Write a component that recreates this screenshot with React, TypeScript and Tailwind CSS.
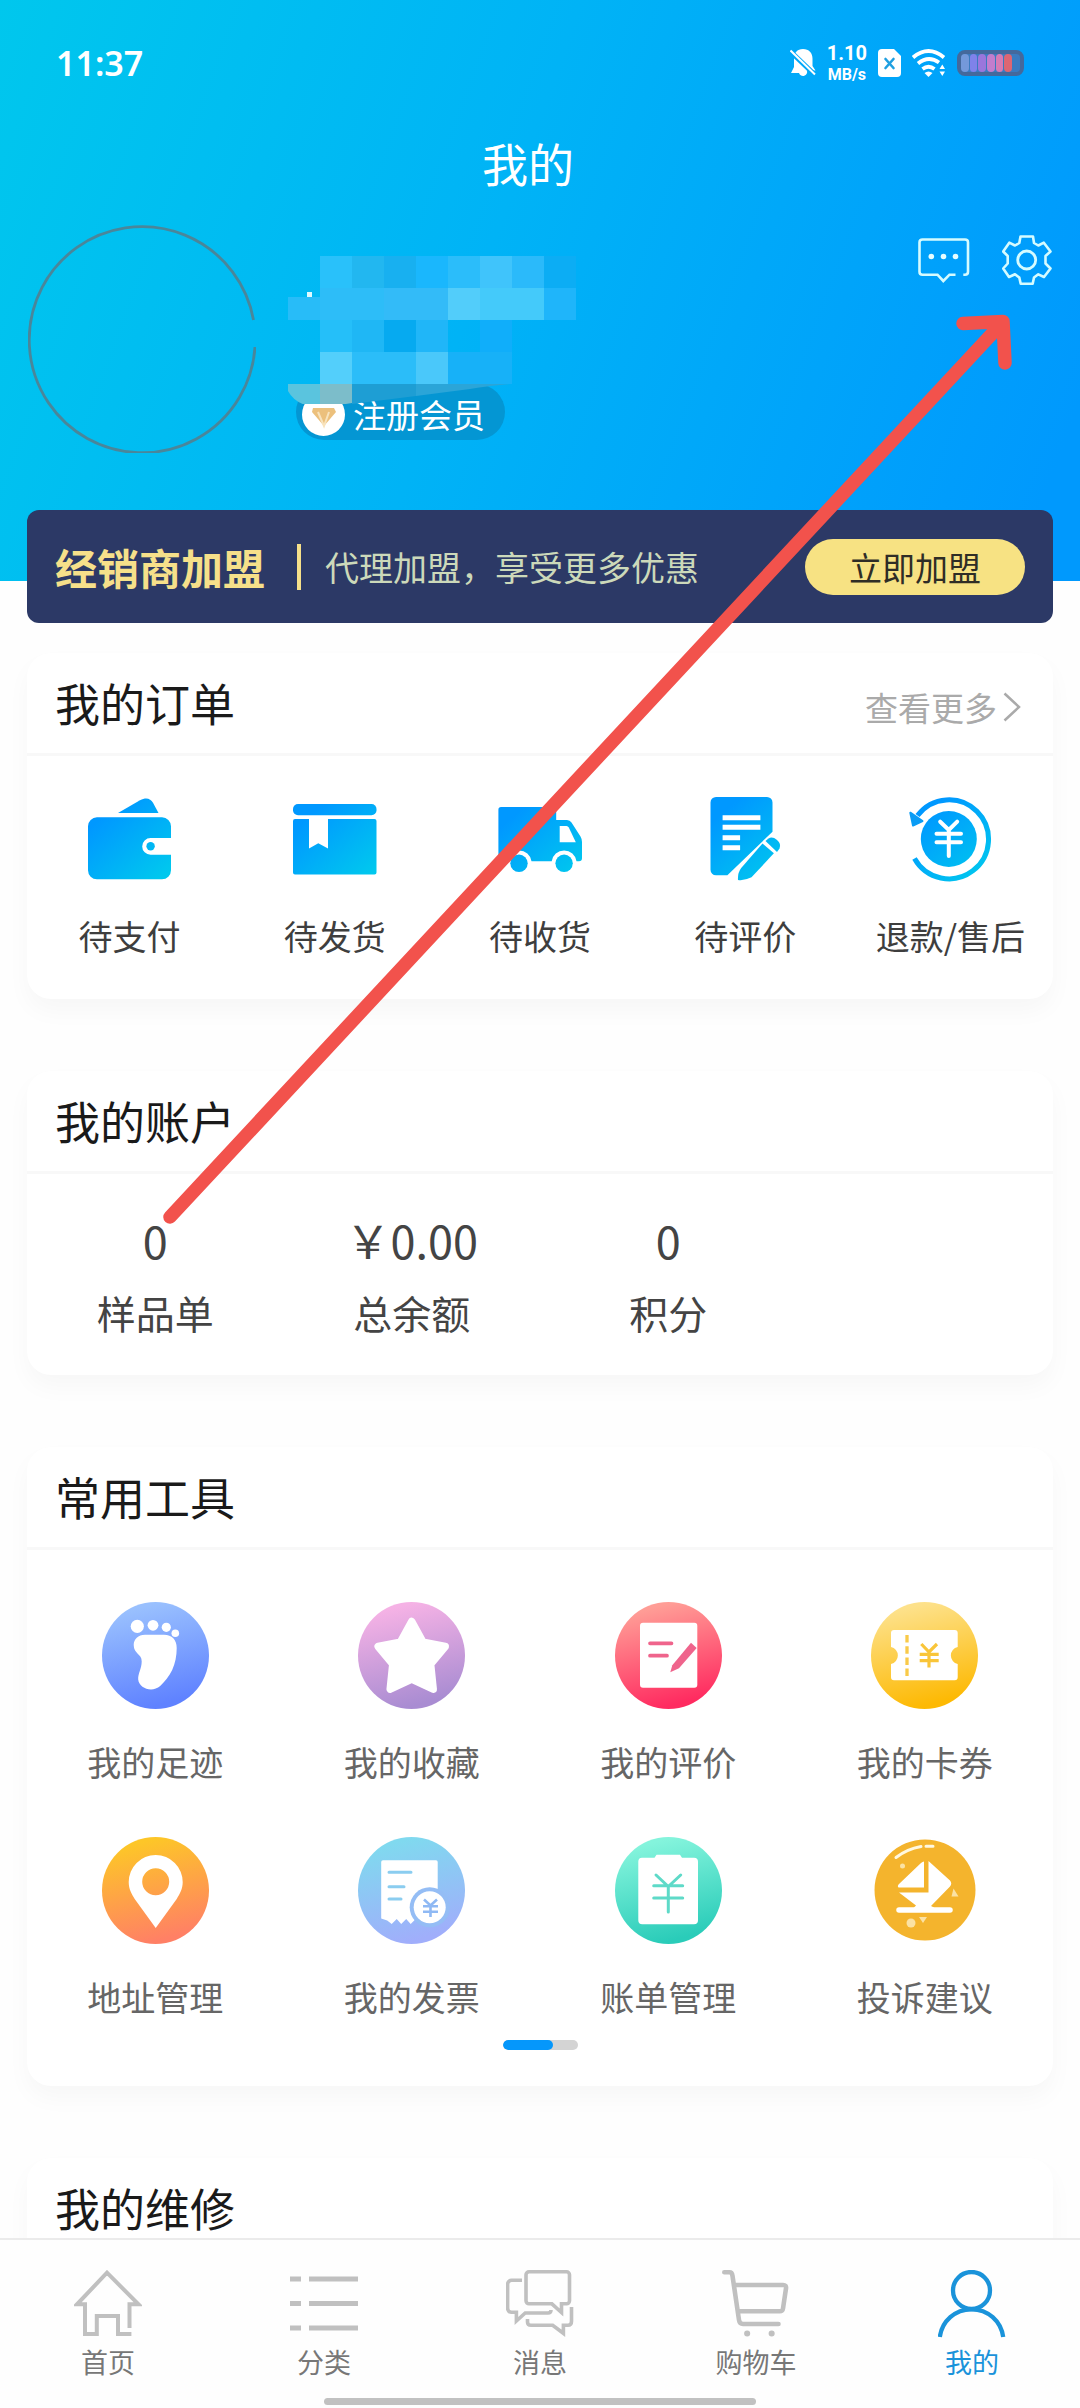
import type { ReactNode } from "react";

type Item = { label: string; icon: ReactNode };

/* Shared blue gradient for the order icons */
function BlueGradient({ id }: { id: string }) {
  return (
    <defs>
      <linearGradient id={id} x1="10" y1="8" x2="74" y2="84" gradientUnits="userSpaceOnUse">
        <stop offset="0.15" stopColor="#0098ff" />
        <stop offset="1" stopColor="#00c8ee" />
      </linearGradient>
    </defs>
  );
}

function WalletIcon() {
  return (
    <svg className="size-22" viewBox="0 0 88 88" aria-hidden="true">
      <BlueGradient id="wallet" />
      <g fill="url(#wallet)">
        <path d="M32 18 54 5.3c6-3.3 10.500-2 13 2.500L72.500 18z" />
        <path d="M11 22.300h65a9 9 0 0 1 9 9V43H64.600a8.400 8.400 0 0 0 0 16.800H85v15.500a9 9 0 0 1-9 9H11a9 9 0 0 1-9-9v-44a9 9 0 0 1 9-9z" />
        <circle cx="64.600" cy="51.200" r="4.200" />
      </g>
    </svg>
  );
}

function ParcelIcon() {
  return (
    <svg className="size-22" viewBox="0 0 88 88" aria-hidden="true">
      <BlueGradient id="parcel" />
      <g fill="url(#parcel)">
        <rect x="2" y="9" width="83.500" height="11.300" rx="5" />
        <path d="M4 24h14v29.500l9.300-5.200 9.700 5.200V24h46.500q2 0 2 2v51.500q0 2-2 2H4q-2 0-2-2V26q0-2 2-2z" />
      </g>
    </svg>
  );
}

function TruckIcon() {
  return (
    <svg className="size-22" viewBox="0 0 88 88" aria-hidden="true">
      <BlueGradient id="truck" />
      <path
        fill="url(#truck)"
        d="M5 12h52.500q2.700 0 2.700 2.700V25H71q3 0 4.500 2.500l9 14Q86 44 86 47v16.300q0 3-3 3H80.500a12.500 12.500 0 0 0-24.800 0H35.500a12.500 12.500 0 0 0-24.800 0H5.400q-3 0-3-3V14.700Q2.400 12 5 12z"
      />
      <path fill="#fff" d="M63.700 31h6.800q1.500 0 2.300 1.500l7 14.800H63.700z" />
      <g fill="url(#truck)">
        <circle cx="23" cy="68.300" r="8.700" />
        <circle cx="68.100" cy="68.300" r="8.700" />
      </g>
    </svg>
  );
}

function EditIcon() {
  return (
    <svg className="size-22" viewBox="0 0 88 88" aria-hidden="true">
      <BlueGradient id="edit" />
      <g fill="url(#edit)">
        <path d="M15 2h51a5.500 5.500 0 0 1 5.500 5.500v29.200L26.400 80.300H15a5.500 5.500 0 0 1-5.500-5.500V7.500A5.500 5.500 0 0 1 15 2z" />
        <path d="M37 85q-.6-7 3.200-12L61.500 48.600l11.400 9.700-22.400 24Q43 86 37 85z" />
        <path d="m64.500 46 3-2.600q4-2.200 8.500 1.600t2.500 8.500L76 57z" />
      </g>
      <path d="M21.600 22.700h37.800M21.600 32.300h37.800M21.600 42.700h17.500M21.600 52.700h17.500" stroke="#fff" strokeWidth="5" />
    </svg>
  );
}

function RefundIcon() {
  return (
    <svg className="size-22" viewBox="0 0 88 88" aria-hidden="true">
      <BlueGradient id="refund" />
      <circle cx="42.800" cy="44" r="28" fill="url(#refund)" />
      <path d="M8.500 63.500A39.500 39.500 0 1 0 11.500 20.500" fill="none" stroke="url(#refund)" strokeWidth="5" />
      <path d="M4.300 17.700 16.500 26 7 30.500z" fill="#0a9cf5" stroke="#0a9cf5" strokeWidth="2" strokeLinejoin="round" />
      <path
        d="m34.200 26.700 8.600 8.300 8.400-8.300M30.500 38.700h24.500M30.500 47.300h24.500M42.800 35v26"
        fill="none"
        stroke="#fff"
        strokeWidth="4"
        strokeLinecap="round"
      />
    </svg>
  );
}

/* Round badge with a vertical gradient, used by every tool */
function Disc({ id, from, to, children }: { id: string; from: string; to: string; children: ReactNode }) {
  return (
    <svg className="size-[107px]" viewBox="0 0 107 107" aria-hidden="true">
      <defs>
        <linearGradient id={id} x1="0.35" y1="0" x2="0.6" y2="1">
          <stop offset="0.05" stopColor={from} />
          <stop offset="0.95" stopColor={to} />
        </linearGradient>
      </defs>
      <circle cx="53.500" cy="53.500" r="53.500" fill={`url(#${id})`} />
      {children}
    </svg>
  );
}

const orders: Item[] = [
  { label: "待支付", icon: <WalletIcon /> },
  { label: "待发货", icon: <ParcelIcon /> },
  { label: "待收货", icon: <TruckIcon /> },
  { label: "待评价", icon: <EditIcon /> },
  { label: "退款/售后", icon: <RefundIcon /> },
];

const account = [
  { label: "样品单", value: "0" },
  { label: "总余额", value: "￥0.00" },
  { label: "积分", value: "0" },
];

const tools: Item[] = [
  {
    label: "我的足迹",
    icon: (
      <Disc id="foot" from="#99c0fe" to="#5f82ff">
        <g fill="#fff">
          <circle cx="35.300" cy="24.300" r="6.600" />
          <circle cx="51" cy="23.300" r="5.400" />
          <circle cx="64.300" cy="25.300" r="4.600" />
          <circle cx="73.300" cy="31.300" r="3.800" />
          <path d="M43 32.700h19c8 0 12.700 5 12.700 13.300 0 8-1.500 15-4.500 22-3 6.500-7.500 11.500-12 16-8 7-21 2.500-22-6.500-.4-6 3.500-11 3.500-18 0-8-8-7.500-8-16.500 0-5.500 4.500-10.300 11.300-10.300z" />
        </g>
      </Disc>
    ),
  },
  {
    label: "我的收藏",
    icon: (
      <Disc id="star" from="#f5b2e5" to="#a98cd2">
        <path
          d="m53.700 19.500 11.400 20.800 22.100 4.200-14.600 17.700 2.600 25-21.500-10-21.500 10 2.600-25-14.600-17.700 22.100-4.200z"
          fill="#fff"
          stroke="#fff"
          strokeWidth="7.500"
          strokeLinejoin="round"
        />
      </Disc>
    ),
  },
  {
    label: "我的评价",
    icon: (
      <Disc id="review" from="#ff9d96" to="#ff2b60">
        <rect x="25" y="20.700" width="57.300" height="65" rx="3" fill="#fff" />
        <path d="M35 41.300h21.500M35 53.700h17" stroke="#ef648c" strokeWidth="3.700" strokeLinecap="round" />
        <path d="m76 40.700 5.700 5.300L64 66.300l-8.700 4 2-7z" fill="#ef648c" />
      </Disc>
    ),
  },
  {
    label: "我的卡券",
    icon: (
      <Disc id="coupon" from="#fde18a" to="#fdb903">
        <path d="M23 28h60.700q3 0 3 3v14a8.700 8.700 0 0 0 0 17v13.300q0 3-3 3H23q-3 0-3-3V62a8.700 8.700 0 0 0 0-17V31q0-3 3-3z" fill="#fff" />
        <path d="M36 33v41.500" stroke="#f9ca48" strokeWidth="3.300" strokeDasharray="7.500 3.700" />
        <path d="m50.300 42 7.700 8 8-8M48.700 52.300h19M48.700 58.700h19M58 50v15.500" fill="none" stroke="#f9c539" strokeWidth="3.200" />
      </Disc>
    ),
  },
  {
    label: "地址管理",
    icon: (
      <Disc id="pin" from="#fdc628" to="#ff8065">
        <path
          fillRule="evenodd"
          fill="#fff"
          d="M53.700 18a27 27 0 0 1 27 27c0 7-3 12-6 17L53.700 91 32.700 62c-3-5-6-10-6-17a27 27 0 0 1 27-27zm0 13.300a13.500 13.500 0 1 0 0 27 13.500 13.500 0 0 0 0-27z"
        />
      </Disc>
    ),
  },
  {
    label: "我的发票",
    icon: (
      <Disc id="invoice" from="#80d9ef" to="#a0aefb">
        <path d="M25 23.300h53q1.700 0 1.700 1.700v57l-5 5-6-5-5 5-6-5-5 5-4.500-5-5 5-4.500-5-5 5-4.500-3.500-6-2V25q0-1.700 1.800-1.700z" fill="#fff" />
        <path d="M31 35.300h22M31 49.700h15M31 62h12" stroke="#8bcdf0" strokeWidth="3" strokeLinecap="round" />
        <circle cx="71.700" cy="70.300" r="20" fill="#94bdf5" />
        <circle cx="71.700" cy="70.300" r="16" fill="#fff" />
        <path d="m66 62.500 6.500 6 6.500-6M65 69.300h15M65 74.700h15M72.500 68.500v11.500" fill="none" stroke="#8fb9f4" strokeWidth="2.600" />
      </Disc>
    ),
  },
  {
    label: "账单管理",
    icon: (
      <Disc id="bill" from="#84f4dc" to="#2accb9">
        <path d="M27 20.700h12.500l2-3h23.500l2 3H79q4 0 4 4v58.600q0 4-4 4H27.300q-4 0-4-4V24.700q0-4 3.700-4z" fill="#fff" />
        <path
          d="m41 38 12.300 11.500L65.700 38M38.700 48.700h29M38.700 61h29M53.300 49.500V75"
          fill="none"
          stroke="#5edac8"
          strokeWidth="3"
          strokeLinecap="round"
        />
      </Disc>
    ),
  },
  {
    label: "投诉建议",
    icon: (
      <svg className="size-[107px]" viewBox="0 0 107 107" aria-hidden="true">
        <circle cx="54" cy="53" r="50.500" fill="#f4b42d" />
        <path d="M53 24.500v26H27.500q-1.500-1.500.5-3.500l22-21q1.500-1.500 3-1.500z" fill="#fff" />
        <path d="M57.500 24 79 43.500q2.500 3 0 6L60 69q3 1 4 3H42q1-2 3-3.500L28 55.500h29.500z" fill="#fff" />
        <path d="M28 73h51" stroke="#fff" strokeWidth="5.500" strokeLinecap="round" />
        <path d="M25 20.500Q36 12 50 9.500M55 9.300h7" fill="none" stroke="#fff8e0" strokeWidth="3" strokeLinecap="round" />
        <g fill="#fbe2a4">
          <circle cx="31.500" cy="29" r="2.500" />
          <path d="m82.500 51.500 5 8h-7z" />
          <circle cx="40" cy="86" r="4.500" />
          <path d="M48 80h8l-4 6z" />
        </g>
      </svg>
    ),
  },
];

const tabs: Item[] = [
  {
    label: "首页",
    icon: <path d="M57.400 64H44V46H22.800v18H11V34.300H3L33 2.700l31.500 31.600h-9V58" strokeWidth="4" />,
  },
  {
    label: "分类",
    icon: <path d="M0 9h11M19 9h49M0 33.500h11M19 33.500h49M0 58h11M19 58h49" strokeWidth="5" />,
  },
  {
    label: "消息",
    icon: (
      <g strokeWidth="3.600">
        <path d="M23 1.800h37.500a3 3 0 0 1 3 3v26a3 3 0 0 1-3 3h-5v8.700l-9.600-8.700H23a3 3 0 0 1-3-3v-26a3 3 0 0 1 3-3z" />
        <path d="M16 10.300H5.600a4 4 0 0 0-4 4v24a4 4 0 0 0 4 4h4.800V51l8.800-8H42q3 0 3-3" />
        <path d="M21.500 49v3q0 3.300 3.500 3.300h21.700l10.700 8V55.300h4.600q3.500 0 3.500-4V37" />
      </g>
    ),
  },
  {
    label: "购物车",
    icon: (
      <g strokeWidth="4.600" strokeLinecap="round" strokeLinejoin="round">
        <path d="M2.300 2.300h5.200q2.500 0 3 3.500L17 50q.6 4 4 4h35.500M13.600 15h47.500q3.400 0 2.900 3.300L61 38.500q-.4 2.800-3.200 2.800H17" />
        <path d="M25.100 63.500h.1M49.600 63.500h.1" strokeWidth="6" />
      </g>
    ),
  },
  {
    label: "我的",
    icon: (
      <g strokeWidth="4.300">
        <circle cx="33.500" cy="20.500" r="18.500" />
        <path d="M1.800 67C4 51 17 39.300 33.500 39.300S63 51 65.200 67" />
      </g>
    ),
  },
];

/* Colour blocks that hide the user name: x, y, width, height, colour */
const blocks: [number, number, number, number, string][] = [
  [32, 0, 32, 32, "#29c1fa"],
  [64, 0, 32, 32, "#22b7f0"],
  [96, 0, 32, 32, "#18b0f0"],
  [128, 0, 32, 32, "#1ab7fd"],
  [160, 0, 32, 32, "#2bbdfa"],
  [192, 0, 32, 32, "#40c4fb"],
  [224, 0, 32, 32, "#2bbafa"],
  [256, 0, 32, 32, "#0cadf4"],
  [0, 41, 32, 23, "#28bcf8"],
  [32, 32, 64, 32, "#2dbdf8"],
  [96, 32, 64, 32, "#33bbf8"],
  [160, 32, 32, 32, "#52cdfa"],
  [192, 32, 64, 32, "#44cafa"],
  [256, 32, 32, 32, "#1fb5fa"],
  [32, 64, 32, 32, "#25bff9"],
  [64, 64, 32, 32, "#1fb7f5"],
  [96, 64, 32, 32, "#06aaf0"],
  [128, 64, 32, 32, "#20b6f8"],
  [192, 64, 32, 32, "#10aefa"],
  [32, 96, 32, 32, "#53cffb"],
  [64, 96, 64, 32, "#2bbdf9"],
  [128, 96, 32, 32, "#4ac8fa"],
  [160, 96, 64, 32, "#17b1f8"],
];

function StatusBar() {
  return (
    <div className="flex h-[126px] items-center justify-between px-14 font-['Noto_Sans','Noto_Sans_CJK_SC',sans-serif]">
      <time className="text-[34px] leading-10 font-semibold">11:37</time>
      <div className="flex items-center gap-[11px]">
        {/* Muted bell */}
        <svg className="h-7 w-[26px]" viewBox="0 0 26 28" aria-hidden="true">
          <path d="M13 0c6 0 9.500 4 9.500 9.500V17l3 4.500H17a4 4 0 0 1-8 2.500H1l3-6V9.500C4 4 7 0 13 0z" fill="#fff" />
          <path d="m0 2 25 24" stroke="#00a7f9" strokeWidth="5" />
          <path d="m.5 1.500 24.500 24" stroke="#fff" strokeWidth="2" />
        </svg>
        <div className="flex flex-col items-center font-['Roboto',sans-serif] font-bold">
          <span className="text-[20px] leading-6">1.10</span>
          <span className="text-[16px] leading-5">MB/s</span>
        </div>
        {/* SIM card */}
        <svg className="h-7 w-[23px]" viewBox="0 0 23 28" aria-hidden="true">
          <path d="M4 0h12l7 7v17q0 4-4 4H4q-4 0-4-4V4q0-4 4-4z" fill="#fff" />
          <path d="m7.500 10 8 9M15.500 10l-8 9" stroke="#1f9fe0" strokeWidth="2.600" strokeLinecap="round" />
        </svg>
        {/* Wi-Fi */}
        <svg className="h-7 w-[34px]" viewBox="0 0 34 28" aria-hidden="true">
          <g fill="none" stroke="#fff" strokeWidth="3.800">
            <path d="M1 8.500Q16.500-4.500 32 8.500" />
            <path d="M6 14.500q10.500-8.500 21-1" />
            <path d="M10.500 20q6-4.500 12 0" />
          </g>
          <path d="M12.500 24q4-3 8 0l-4 4zM27.500 20h5.500l-2.700-4.500zM27.500 22.500h5.500L30.300 27z" fill="#fff" />
        </svg>
        {/* Battery */}
        <div className="flex h-[26px] w-[67px] items-center gap-px rounded-lg border-4 border-[#44699c] bg-[#3a7bc0] pr-2">
          <span className="h-[18px] flex-1 rounded bg-[#7499da]" />
          <span className="h-[18px] flex-1 rounded bg-[#7f82ea]" />
          <span className="h-[18px] flex-1 rounded bg-[#9a76dc]" />
          <span className="h-[18px] flex-1 rounded bg-[#c27dcd]" />
          <span className="h-[18px] flex-1 rounded bg-[#d67bb4]" />
          <span className="h-[18px] flex-1 rounded bg-[#dd6673]" />
        </div>
      </div>
    </div>
  );
}

function Profile() {
  return (
    <section className="flex items-start gap-8 px-7 pt-[21px]">
      <svg className="size-[228px] shrink-0" viewBox="0 0 228 228" role="img" aria-label="头像">
        <path d="M227 122A113 113 0 1 1 225.500 95" fill="none" stroke="#4a869a" strokeWidth="2.800" />
      </svg>

      <div className="flex flex-1 flex-col items-start pt-[31px]">
        <svg className="relative z-10 h-[148px] w-72" viewBox="0 0 288 148" aria-hidden="true">
          {blocks.map(([x, y, w, h, fill]) => (
            <rect key={`${x}-${y}`} x={x} y={y} width={w} height={h} fill={fill} />
          ))}
          <rect x="19" y="36" width="5" height="5" fill="#dffaff" />
          <path d="M0 128h32v24q-24-2-32-17z" fill="#5ac4de" />
          <path d="M32 128h32v19l-32 5z" fill="#7cbdca" />
          <path d="M64 128h64v12l-64 8z" fill="#1e9ed4" />
          <path d="M128 128h94q-22 2-40 5l-54 7z" fill="#2ba5d8" />
        </svg>
        <div className="-mt-5 ml-2 flex h-14 items-center gap-2 rounded-full bg-[#0496d3] pt-1 pr-5 pl-1.5">
          <svg className="size-[43px]" viewBox="0 0 43 43" aria-hidden="true">
            <circle cx="21.500" cy="21.500" r="21.500" fill="#fff" />
            <path d="M11 15h21l2 4-12 14L10 19z" fill="#ecc07c" />
            <path d="m16 19 6 14 5-14" fill="none" stroke="#f8e3bd" strokeWidth="2" />
          </svg>
          <span className="text-[33px] leading-[50px]">注册会员</span>
        </div>
      </div>

      <div className="flex items-start gap-8 pt-2.5">
        <button type="button" aria-label="消息">
          <svg className="mt-[3px] h-[45px] w-[52px]" viewBox="0 0 52 45" aria-hidden="true">
            <path
              d="M45.300 36.700H47q3 0 3-3V4.500q0-3-3-3H4.500q-3 0-3 3v29.200q0 3 3 3h15l5.800 6.300 6.200-6.300h6"
              fill="none"
              stroke="#d5fbff"
              strokeWidth="2.600"
            />
            <g fill="#e6fdff">
              <circle cx="13.300" cy="18.500" r="2.800" />
              <circle cx="25.500" cy="18.500" r="2.800" />
              <circle cx="37.500" cy="18.500" r="2.800" />
            </g>
          </svg>
        </button>
        <button type="button" aria-label="设置">
          <svg className="size-[50px]" viewBox="0 0 50 50" aria-hidden="true">
            <path
              d="M18.500 1.500h12.500l1 6.500 4.300 2.500 5.500-2.800 6.700 8.800-5 4.500v7.500l5 5-6.500 8.500-5.700-2.700-4.300 3.200-1.300 6.200H18.700l-1.400-6.200-4.300-3.200L7 42 1.200 33.500l4.500-5V21L1.200 16.500 7.300 7.700l5.700 2.800L17.300 8z"
              fill="none"
              stroke="#d5fbff"
              strokeWidth="2.600"
              strokeLinejoin="round"
            />
            <circle cx="24.700" cy="25" r="9" fill="none" stroke="#d5fbff" strokeWidth="2.800" />
          </svg>
        </button>
      </div>
    </section>
  );
}

function Card({ title, action, children }: { title: string; action?: ReactNode; children?: ReactNode }) {
  return (
    <section className="rounded-3xl bg-white shadow-[0_12px_24px_rgba(0,0,0,0.03)]">
      <div className="flex h-[103px] items-center justify-between border-b-3 border-[#f8f8f8] pr-8 pl-7">
        <h2 className="text-[45px] leading-[60px] text-[#1a1a1a]">{title}</h2>
        {action}
      </div>
      {children}
    </section>
  );
}

export default function App() {
  return (
    <div className="relative flex h-screen flex-col overflow-hidden bg-[#fefefe] font-['Noto_Sans_CJK_SC',sans-serif]">
      <main className="min-h-0 flex-1 overflow-y-auto [scrollbar-width:none]">
        {/* Header */}
        <header className="bg-[linear-gradient(110deg,#00c7ed_0%,#00b3f6_45%,#0099fd_95%)] pb-32 text-white">
          <StatusBar />
          <h1 className="h-[78px] pr-6 text-center text-[46px] leading-[72px]">我的</h1>
          <Profile />
        </header>

        <div className="px-[27px]">
          {/* Dealer banner */}
          <section className="relative -mt-[71px] flex h-[113px] items-center rounded-xl bg-[#2c3966] px-7">
            <strong className="text-[42px] leading-[60px] font-bold text-[#f6e08a]">经销商加盟</strong>
            <span className="mr-6 ml-8 h-[46px] w-1 bg-[#f6e08a]" />
            <span className="flex-1 text-[34px] leading-[50px] text-[#ccd9ba]">代理加盟，享受更多优惠</span>
            <button type="button" className="h-14 rounded-full bg-[#f7e283] px-11 text-[33px] leading-[50px] text-[#2f2d26]">
              立即加盟
            </button>
          </section>

          <div className="mt-[30px] flex flex-col gap-[72px]">
            {/* Orders */}
            <Card
              title="我的订单"
              action={
                <a href="#orders" className="flex items-center gap-1.5 pt-2 text-[33px] leading-[50px] text-[#aaaaaa]">
                  查看更多
                  <svg className="h-[30px] w-[18px]" viewBox="0 0 18 30" aria-hidden="true">
                    <path d="m1.500 1.500 14.500 13.500L1.500 28.500" fill="none" stroke="currentColor" strokeWidth="2.500" />
                  </svg>
                </a>
              }
            >
              <div className="grid grid-cols-5 pt-[39px] pb-[38px]">
                {orders.map((item) => (
                  <a key={item.label} href="#order" className="flex flex-col items-center gap-7">
                    {item.icon}
                    <span className="text-[34px] leading-[50px] text-[#3e3e3e]">{item.label}</span>
                  </a>
                ))}
              </div>
            </Card>

            {/* Account */}
            <Card title="我的账户">
              <dl className="grid grid-cols-4 pt-9 pb-[33px]">
                {account.map((item) => (
                  <div key={item.label} className="flex flex-col-reverse items-center gap-3 text-[#444444]">
                    <dt className="text-[39px] leading-[60px]">{item.label}</dt>
                    <dd className="text-[45px] leading-[60px]">{item.value}</dd>
                  </div>
                ))}
              </dl>
            </Card>

            {/* Tools */}
            <Card title="常用工具">
              <div className="grid grid-cols-4 gap-y-[50px] pt-[52px]">
                {tools.map((item) => (
                  <a key={item.label} href="#tool" className="flex flex-col items-center gap-7">
                    {item.icon}
                    <span className="text-[34px] leading-[50px] text-[#666666]">{item.label}</span>
                  </a>
                ))}
              </div>
              <div className="flex justify-center pt-[18px] pb-9">
                <div className="h-2.5 w-[75px] overflow-hidden rounded-full bg-[#d4d4d4]">
                  <div className="h-full w-2/3 rounded-full bg-[#0597fb]" />
                </div>
              </div>
            </Card>

            {/* Repairs */}
            <Card title="我的维修" />
          </div>
        </div>
      </main>

      {/* Bottom tabs */}
      <nav className="relative border-t-2 border-[#ebebeb] bg-[#fefefe] pt-[30px] pb-[3px]">
        <div className="grid grid-cols-5">
          {tabs.map((tab) => {
            const active = tab.label === "我的";
            return (
              <a
                key={tab.label}
                href="#tab"
                aria-current={active ? "page" : undefined}
                className={`flex flex-col items-center gap-1 ${active ? "text-[#1a93da]" : "text-[#777777]"}`}
              >
                <svg
                  className={`size-[68px] ${active ? "text-[#1a93da]" : "text-[#c0c0c0]"}`}
                  viewBox="0 0 68 68"
                  fill="none"
                  stroke="currentColor"
                  aria-hidden="true"
                >
                  {tab.icon}
                </svg>
                <span className="text-[27px] leading-10">{tab.label}</span>
              </a>
            );
          })}
        </div>
        <div className="mx-auto mt-4 h-[7px] w-2/5 rounded-full bg-[#c1c1c1]" />
      </nav>

      {/* Arrow that points at the settings button */}
      <svg
        className="pointer-events-none absolute top-[312px] left-[160px] h-[920px] w-[856px]"
        viewBox="160 312 856 920"
        aria-hidden="true"
      >
        <path
          d="M170 1217 1003 322M963 323.500l40-2 2 41.500"
          fill="none"
          stroke="#f2524c"
          strokeWidth="13.500"
          strokeLinecap="round"
          strokeLinejoin="round"
        />
      </svg>
    </div>
  );
}
